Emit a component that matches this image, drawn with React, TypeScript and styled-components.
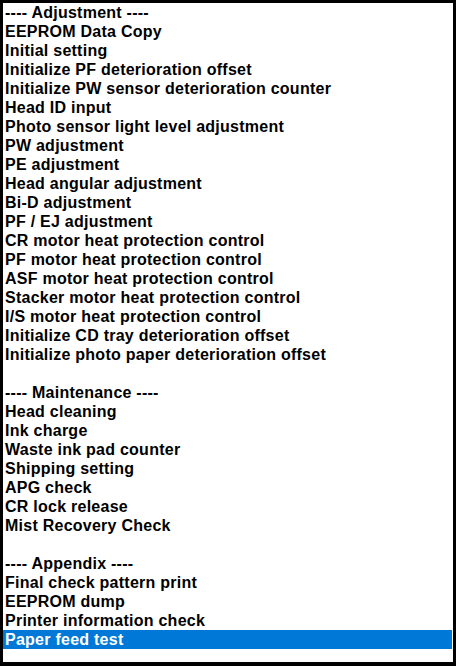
import styled, { createGlobalStyle } from "styled-components";

const GlobalStyle = createGlobalStyle`
  html, body {
    margin: 0;
    padding: 0;
    background: #ffffff;
  }
`;

const ListBox = styled.ul`
  box-sizing: border-box;
  width: 456px;
  height: 666px;
  margin: 0;
  padding: 0 1px 13px 0;
  list-style: none;
  background: #ffffff;
  border-style: solid;
  border-color: #000000;
  border-width: 3px 3px 4px 3px;
  font-family: "Liberation Sans", Arial, sans-serif;
  font-weight: bold;
  font-size: 16px;
  letter-spacing: 0.25px;
  overflow: hidden;
`;

const Item = styled.li<{ $selected?: boolean }>`
  height: 19px;
  line-height: 19px;
  padding-left: 2px;
  white-space: nowrap;
  color: ${(p) => (p.$selected ? "#ffffff" : "#000000")};
  background: ${(p) => (p.$selected ? "#0078d7" : "transparent")};
`;

const items = [
  "---- Adjustment ----",
  "EEPROM Data Copy",
  "Initial setting",
  "Initialize PF deterioration offset",
  "Initialize PW sensor deterioration counter",
  "Head ID input",
  "Photo sensor light level adjustment",
  "PW adjustment",
  "PE adjustment",
  "Head angular adjustment",
  "Bi-D adjustment",
  "PF / EJ adjustment",
  "CR motor heat protection control",
  "PF motor heat protection control",
  "ASF motor heat protection control",
  "Stacker motor heat protection control",
  "I/S motor heat protection control",
  "Initialize CD tray deterioration offset",
  "Initialize photo paper deterioration offset",
  "",
  "---- Maintenance ----",
  "Head cleaning",
  "Ink charge",
  "Waste ink pad counter",
  "Shipping setting",
  "APG check",
  "CR lock release",
  "Mist Recovery Check",
  "",
  "---- Appendix ----",
  "Final check pattern print",
  "EEPROM dump",
  "Printer information check",
  "Paper feed test",
];

const App = () => {
  return (
    <>
      <GlobalStyle />
      <ListBox>
        {items.map((text, i) => (
          <Item key={i} $selected={text === "Paper feed test"}>
            {text}
          </Item>
        ))}
      </ListBox>
    </>
  );
};

export default App;
